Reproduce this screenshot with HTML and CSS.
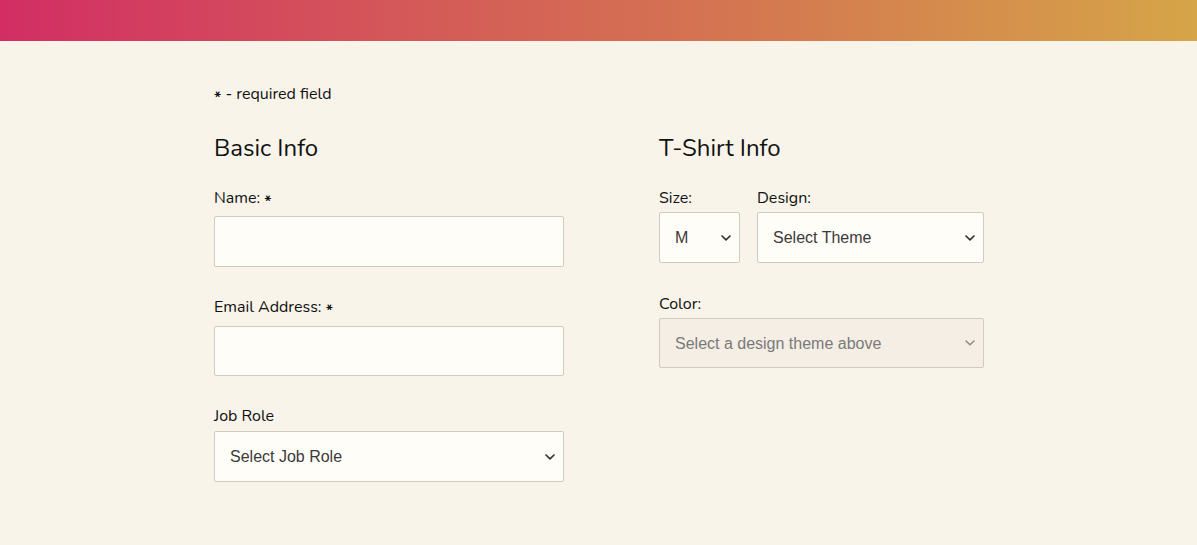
FILE: index.html
```html
<!DOCTYPE html>
<html lang="en">
<head>
<meta charset="utf-8">
<title>Registration</title>
<link rel="stylesheet" href="styles.css">
</head>
<body>
<header class="topbar"></header>
<main class="page">
  <p class="note"><span class="star">*</span> - required field</p>
  <div class="columns">
    <section class="col col-basic">
      <h2 class="heading">Basic Info</h2>
      <div class="field field-name">
        <label class="label" for="name">Name: <span class="star">*</span></label>
        <input class="input" id="name" type="text">
      </div>
      <div class="field field-email">
        <label class="label" for="email">Email Address: <span class="star">*</span></label>
        <input class="input" id="email" type="email">
      </div>
      <div class="field field-job">
        <label class="label" for="job">Job Role</label>
        <div class="select-wrap">
          <select class="select" id="job"><option>Select Job Role</option></select>
          <svg class="chev" width="12" height="8" viewBox="0 0 12 8"><path d="M2 2 L6 5.8 L10 2" fill="none" stroke="#333" stroke-width="1.7" stroke-linecap="round" stroke-linejoin="round"/></svg>
        </div>
      </div>
    </section>
    <section class="col col-shirt">
      <h2 class="heading">T-Shirt Info</h2>
      <div class="shirt-row">
        <div class="field field-size">
          <label class="label" for="size">Size:</label>
          <div class="select-wrap">
            <select class="select" id="size"><option>M</option></select>
            <svg class="chev" width="12" height="8" viewBox="0 0 12 8"><path d="M2 2 L6 5.8 L10 2" fill="none" stroke="#333" stroke-width="1.7" stroke-linecap="round" stroke-linejoin="round"/></svg>
          </div>
        </div>
        <div class="field field-design">
          <label class="label" for="design">Design:</label>
          <div class="select-wrap">
            <select class="select" id="design"><option>Select Theme</option></select>
            <svg class="chev" width="12" height="8" viewBox="0 0 12 8"><path d="M2 2 L6 5.8 L10 2" fill="none" stroke="#333" stroke-width="1.7" stroke-linecap="round" stroke-linejoin="round"/></svg>
          </div>
        </div>
      </div>
      <div class="field field-color">
        <label class="label" for="color">Color:</label>
        <div class="select-wrap">
          <select class="select select-disabled" id="color" disabled><option>Select a design theme above</option></select>
          <svg class="chev" width="12" height="8" viewBox="0 0 12 8"><path d="M2 2 L6 5.8 L10 2" fill="none" stroke="#8a8a8a" stroke-width="1.5" stroke-linecap="round" stroke-linejoin="round"/></svg>
        </div>
      </div>
    </section>
  </div>
</main>
</body>
</html>
```

FILE: styles.css
```css
* { box-sizing: border-box; }

body {
  margin: 0;
  background: #f8f4ea;
  font-family: "Nunito", "Lato", "Noto Sans", sans-serif;
  color: #111;
}

.topbar {
  height: 41px;
  background: linear-gradient(90deg, #d22e64 0%, #d45a58 35%, #d47a50 65%, #d6a548 100%);
}

.page {
  padding: 43px 0 0 214px;
}

.note {
  margin: 0;
  font-size: 16px;
  line-height: 20px;
  height: 20px;
}

.star {
  display: inline-block;
  font-size: 16px;
  line-height: 0;
  vertical-align: -4px;
  font-weight: 700;
}

.columns {
  display: flex;
  gap: 95px;
  margin-top: 29px;
}

.col-basic { width: 350px; }
.col-shirt { width: 325px; }

.heading {
  margin: 0 0 25px;
  font-size: 24px;
  line-height: 30px;
  height: 30px;
  font-weight: 400;
}

.label {
  display: block;
  font-size: 16px;
  line-height: 20px;
  height: 20px;
}

.field-name .label { margin-bottom: 8px; }
.field-email .label { margin-bottom: 9px; }
.field-job .label { margin-bottom: 5px; }
.shirt-row .label,
.field-color .label { margin-bottom: 4px; }

.field-name { margin-bottom: 30px; }
.field-email { margin-bottom: 30px; }

.input {
  display: block;
  width: 100%;
  height: 51px;
  border: 1px solid #cfcbc3;
  border-radius: 2px;
  background: #fffdf8;
  font-size: 16px;
  padding: 0 16px;
}

.field-email .input { height: 50px; }

.select-wrap {
  position: relative;
}

.select {
  display: block;
  width: 100%;
  height: 51px;
  appearance: none;
  -webkit-appearance: none;
  border: 1px solid #cfcbc3;
  border-radius: 2px;
  background: #fffdf8;
  font-family: "Liberation Sans", Arial, sans-serif;
  font-size: 16px;
  color: #3a3a3a;
  padding: 0 30px 0 15px;
}

.select-disabled {
  background: #f4eee4;
  color: #7a7a7a;
  opacity: 1;
  height: 50px;
}

.chev {
  position: absolute;
  right: 8px;
  top: 50%;
  margin-top: -4px;
  pointer-events: none;
}

.shirt-row {
  display: flex;
  gap: 17px;
}

.field-size { width: 81px; }
.field-design { width: 227px; }

.field-color { margin-top: 31px; }
```
